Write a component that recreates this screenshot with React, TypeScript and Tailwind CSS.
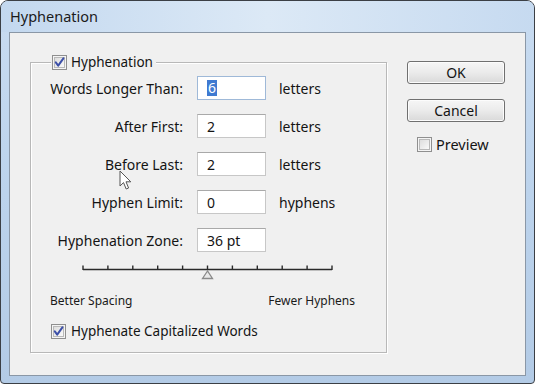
import React from "react";

function Check({ checked }: { checked: boolean }) {
  return (
    <svg width="15" height="15" viewBox="0 0 15 15" className="shrink-0">
      <defs>
        <linearGradient id="cbg" x1="0" y1="0" x2="1" y2="1">
          <stop offset="0" stopColor="#dcdcdc" />
          <stop offset="1" stopColor="#fbfbfb" />
        </linearGradient>
      </defs>
      <rect x="0.5" y="0.5" width="14" height="14" fill="#f4f4f4" stroke="#8f8f8f" />
      <rect x="2.5" y="2.5" width="10" height="10" fill="url(#cbg)" stroke="#b9b9b9" />
      {checked && (
        <path d="M3.8 7.4 L6.2 10.6 L11.4 3.4" fill="none" stroke="#3c4fa8" strokeWidth="2" strokeLinecap="round" strokeLinejoin="round" />
      )}
    </svg>
  );
}

function Field({ label, value, unit, selected }: { label: string; value: string; unit?: string; selected?: boolean }) {
  return (
    <div className="flex items-center h-[24px]">
      <div className="w-[152px] text-right pr-[0px]">{label}</div>
      <div
        className={
          "ml-[14px] w-[69px] h-[24px] bg-white border flex items-center pl-[9px] " +
          (selected ? "border-[#9fb9d8]" : "border-[#c7c7c7] border-t-[#a9a9a9]")
        }
      >
        {selected ? (
          <span className="bg-[#3f7ad1] text-white leading-[16px] px-[1px]">{value}</span>
        ) : (
          <span>{value}</span>
        )}
      </div>
      {unit && <div className="ml-[13px]">{unit}</div>}
    </div>
  );
}

function Btn({ children }: { children: React.ReactNode }) {
  return (
    <div className="w-[98px] h-[23px] rounded-[3px] border border-[#707070] bg-gradient-to-b from-[#f6f6f6] via-[#ebebeb] to-[#d9d9d9] flex items-center justify-center shadow-[inset_0_0_0_1px_#fcfcfc]">
      {children}
    </div>
  );
}

export default function App() {
  const ticks = Array.from({ length: 11 }, (_, i) => 1 + i * 24.9);
  return (
    <div
      className="w-[535px] h-[384px] relative overflow-hidden rounded-t-[8px] rounded-b-[4px] border border-[#3b3f45] bg-gradient-to-b from-[#c9dcf1] via-[#bcd3ec] to-[#b3cbe6] flex flex-col text-[#141414]"
      style={{ fontFamily: '"Noto Sans", "Open Sans", sans-serif' }}
    >
      <div className="h-[31px] shrink-0 flex items-center pl-[9px] text-[14.5px] text-[#1b1b1b] bg-gradient-to-r from-[#c3d8ef] via-[#dce9f6] to-[#c6daf0]">
        Hyphenation
      </div>
      <div className="mx-[8px] mb-[7px] flex-1 border border-[#8a97a6] bg-[#f0f0f0] flex text-[14px]">
        <div className="ml-[20px] mt-[29px] w-[357px] h-[291px] border border-[#b8b8b8] shadow-[inset_1px_1px_0_#ffffff,1px_1px_0_#ffffff] relative">
          <div className="absolute left-[20px] top-[-9px] bg-[#f0f0f0] flex items-center pr-[3px] pl-[1px] h-[16px]">
            <Check checked />
            <span className="ml-[4px] text-[13.5px]">Hyphenation</span>
          </div>
          <div className="pt-[13px] flex flex-col gap-[14px]">
            <Field label="Words Longer Than:" value="6" unit="letters" selected />
            <Field label="After First:" value="2" unit="letters" />
            <Field label="Before Last:" value="2" unit="letters" />
            <Field label="Hyphen Limit:" value="0" unit="hyphens" />
            <Field label="Hyphenation Zone:" value="36 pt" />
          </div>
          <svg width="254" height="16" viewBox="0 0 254 16" className="ml-[51px] mt-[12px] block">
            <line x1="1" y1="5.5" x2="250" y2="5.5" stroke="#2a2a2a" strokeWidth="1.6" />
            {ticks.map((x, i) => (
              <line key={i} x1={x} y1="1.5" x2={x} y2="6" stroke="#2a2a2a" strokeWidth="1.4" />
            ))}
            <path d="M125.5 7 L120.5 14.5 L130.5 14.5 Z" fill="#e8e8e8" stroke="#8a8a8a" strokeWidth="1.3" />
          </svg>
          <div className="flex justify-between ml-[19px] mr-[31px] mt-[12px] text-[12px] text-[#1a1a1a]">
            <span>Better Spacing</span>
            <span>Fewer Hyphens</span>
          </div>
          <div className="flex items-center ml-[20px] mt-[11px]">
            <Check checked />
            <span className="ml-[5px] text-[13.5px]">Hyphenate Capitalized Words</span>
          </div>
        </div>
        <div className="ml-[20px] mt-[28px] flex flex-col items-start">
          <Btn>OK</Btn>
          <div className="mt-[15px]">
            <Btn>Cancel</Btn>
          </div>
          <div className="mt-[12px] ml-[10px] flex items-center">
            <Check checked={false} />
            <span className="ml-[4px] text-[14.5px]">Preview</span>
          </div>
        </div>
      </div>
      <svg width="14" height="21" viewBox="0 0 14 21" className="absolute left-[118px] top-[169px]">
        <path d="M1 1 L1 16 L4.5 12.6 L7.2 19 L9.6 18 L7 11.8 L11.8 11.8 Z" fill="#ffffff" stroke="#555" strokeWidth="1" strokeLinejoin="round" />
      </svg>
    </div>
  );
}
